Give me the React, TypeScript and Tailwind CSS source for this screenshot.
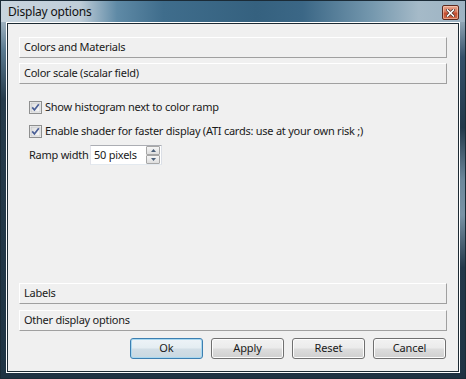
import React from "react";

const font = { fontFamily: '"Noto Sans", "Open Sans", sans-serif' };

function Tab({ label }: { label: string }) {
  return (
    <div className="h-[21px] flex items-center pl-[4px] bg-[#f0f0f0] border-t border-l border-t-white border-l-white border-b border-r border-b-[#a0a0a0] border-r-[#a0a0a0] text-[11px] tracking-[-0.25px] text-[#1a1a1a] whitespace-nowrap">
      {label}
    </div>
  );
}

function Check() {
  return (
    <svg width="13" height="13" viewBox="0 0 13 13" className="shrink-0">
      <defs>
        <linearGradient id="cbg" x1="0" y1="0" x2="1" y2="1">
          <stop offset="0" stopColor="#dcdcdc" />
          <stop offset="1" stopColor="#fbfbfb" />
        </linearGradient>
      </defs>
      <rect x="0.5" y="0.5" width="12" height="12" fill="#f4f4f4" stroke="#8e8f8f" />
      <rect x="2" y="2" width="9" height="9" fill="url(#cbg)" stroke="#b6b8bc" strokeWidth="0.6" />
      <path d="M3.2 6.4 L5.4 8.9 L9.8 3.2" fill="none" stroke="#4a5f97" strokeWidth="1.7" />
    </svg>
  );
}

function Btn({ label, def }: { label: string; def?: boolean }) {
  return (
    <div
      className={
        "w-[73px] h-[21px] rounded-[3px] border flex items-center justify-center text-[11px] tracking-[-0.1px] text-[#1a1a1a] " +
        (def
          ? "border-[#3c7fb1] bg-[linear-gradient(to_bottom,#edf3f7_0%,#e4edf2_48%,#d2dee6_52%,#c9d8e1_100%)] shadow-[inset_0_0_0_1px_#a9d8f0]"
          : "border-[#707070] bg-[linear-gradient(to_bottom,#f2f2f2_0%,#ebebeb_48%,#dddddd_52%,#cfcfcf_100%)] shadow-[inset_0_0_0_1px_#fcfcfc]")
      }
    >
      {label}
    </div>
  );
}

export default function App() {
  return (
    <div style={font} className="w-[466px] h-[379px] border border-[#1b2b37] bg-[#263b4b] flex flex-col">
      {/* Title bar */}
      <div className="h-[21px] shrink-0 relative flex items-center pl-[7px] bg-[linear-gradient(to_right,#c8d5de_0%,#bfcdd8_17%,#5f8aa6_25%,#3f6d8c_35%,#35617f_55%,#3b6786_65%,#7598ae_80%,#a5bac8_90%,#9db3c3_100%)]">
        <span className="text-[12px] tracking-[-0.2px] text-[#111] leading-none">Display options</span>
        <div className="absolute left-[441px] top-[4px] w-[17px] h-[15px] rounded-[2px] border border-[#5b2a20] bg-[linear-gradient(to_bottom,#e9a890_0%,#d8775c_45%,#c24d30_55%,#d46a48_100%)] flex items-center justify-center shadow-[inset_0_0_0_1px_rgba(255,220,200,0.5)]">
          <svg width="9" height="8" viewBox="0 0 9 8">
            <path d="M1.5 1 L7.5 7 M7.5 1 L1.5 7" stroke="#4a2a22" strokeWidth="3" strokeLinecap="square" />
            <path d="M1.5 1 L7.5 7 M7.5 1 L1.5 7" stroke="#ffffff" strokeWidth="1.6" strokeLinecap="square" />
          </svg>
        </div>
      </div>
      {/* Middle */}
      <div className="flex-1 flex">
        <div className="w-[5px] bg-[linear-gradient(to_bottom,#9fb2c0_0%,#5a7a90_8%,#263b4b_22%,#1f3444_100%)]" />
        <div className="flex-1 border border-white flex">
          <div className="flex-1 border border-[#1c2a33] bg-[#f0f0f0] flex flex-col px-[11px] pt-[13px] pb-[12px]">
            <Tab label="Colors and Materials" />
            <div className="mt-[5px]">
              <Tab label="Color scale (scalar field)" />
            </div>
            <div className="flex-1 flex flex-col pt-[11px] pl-[10px] text-[11px] tracking-[-0.25px] text-[#1a1a1a] whitespace-nowrap">
              <div className="h-[24px] flex items-center gap-[3px]">
                <Check />
                <span>Show histogram next to color ramp</span>
              </div>
              <div className="h-[24px] flex items-center gap-[3px]">
                <Check />
                <span>Enable shader for faster display (ATI cards: use at your own risk ;)</span>
              </div>
              <div className="h-[24px] flex items-center">
                <span className="w-[61px] shrink-0">Ramp width</span>
                <div className="w-[72px] h-[20px] bg-white border border-[#abadb3] border-b-[#e3e9ef] border-r-[#dbdfe6] border-l-[#e2e3ea] flex items-center">
                  <span className="flex-1 pl-[3px]">50 pixels</span>
                  <div className="w-[14px] h-[18px] mr-[1px] flex flex-col">
                    <div className="flex-1 border border-[#a7a7a7] rounded-[1px] bg-[linear-gradient(to_bottom,#f6f6f6,#dedede)] flex items-center justify-center">
                      <svg width="5" height="3" viewBox="0 0 5 3"><path d="M0 3 L2.5 0 L5 3 Z" fill="#4c607a" /></svg>
                    </div>
                    <div className="flex-1 border border-[#a7a7a7] rounded-[1px] bg-[linear-gradient(to_bottom,#f6f6f6,#dedede)] flex items-center justify-center">
                      <svg width="5" height="3" viewBox="0 0 5 3"><path d="M0 0 L2.5 3 L5 0 Z" fill="#4c607a" /></svg>
                    </div>
                  </div>
                </div>
              </div>
            </div>
            <Tab label="Labels" />
            <div className="mt-[6px]">
              <Tab label="Other display options" />
            </div>
            <div className="mt-[7px] flex justify-end gap-[8px] pr-[1px]">
              <Btn label="Ok" def />
              <Btn label="Apply" />
              <Btn label="Reset" />
              <Btn label="Cancel" />
            </div>
          </div>
        </div>
        <div className="w-[5px] bg-[linear-gradient(to_bottom,#8ea4b4_0%,#34506a_10%,#22384a_30%,#6d889c_45%,#7a93a6_55%,#22384a_70%,#1f3444_100%)]" />
      </div>
      <div className="h-[5px] shrink-0 bg-[#1f3242]" />
    </div>
  );
}
